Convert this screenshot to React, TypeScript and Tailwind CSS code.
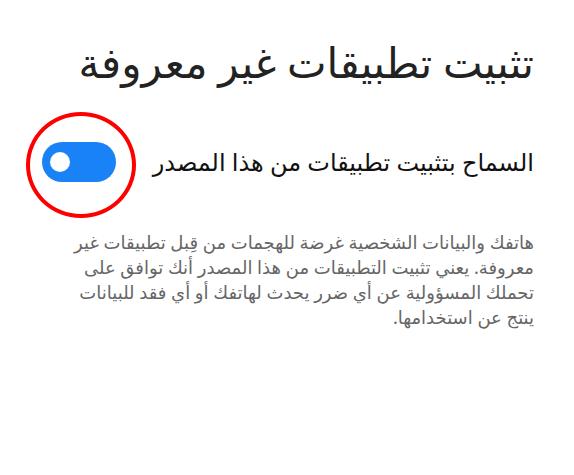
export default function App() {
  const lines = [
    "هاتفك والبيانات الشخصية غرضة للهجمات من قِبل تطبيقات غير",
    "معروفة. يعني تثبيت التطبيقات من هذا المصدر أنك توافق على",
    "تحملك المسؤولية عن أي ضرر يحدث لهاتفك أو أي فقد للبيانات",
    "ينتج عن استخدامها.",
  ];
  return (
    <div
      dir="rtl"
      className="w-[574px] h-[475px] bg-white pr-[40px] pl-[42px] pt-[30px] font-['Noto_Sans','DejaVu_Sans',sans-serif]"
    >
      <h1 className="text-[42px] leading-[64px] text-[#222] font-normal whitespace-nowrap">تثبيت تطبيقات غير معروفة</h1>
      <div className="mt-[48px] flex items-center justify-between">
        <span className="text-[24px] leading-[36px] text-[#111] whitespace-nowrap">السماح بتثبيت تطبيقات من هذا المصدر</span>
        <div className="relative w-[74px] h-[40px] rounded-full bg-[#1a82f7] flex items-center" dir="ltr">
          <div className="ml-[8px] w-[20px] h-[20px] rounded-full bg-white" />
          <div className="absolute left-[-16px] top-[-30px] w-[110px] h-[106px] rounded-[50%] border-[4px] border-[#ff0000]" />
        </div>
      </div>
      <div className="mt-[48px] text-[18px] leading-[25px] text-[#666] whitespace-nowrap">
        {lines.map((l) => (
          <div key={l}>{l}</div>
        ))}
      </div>
    </div>
  );
}
